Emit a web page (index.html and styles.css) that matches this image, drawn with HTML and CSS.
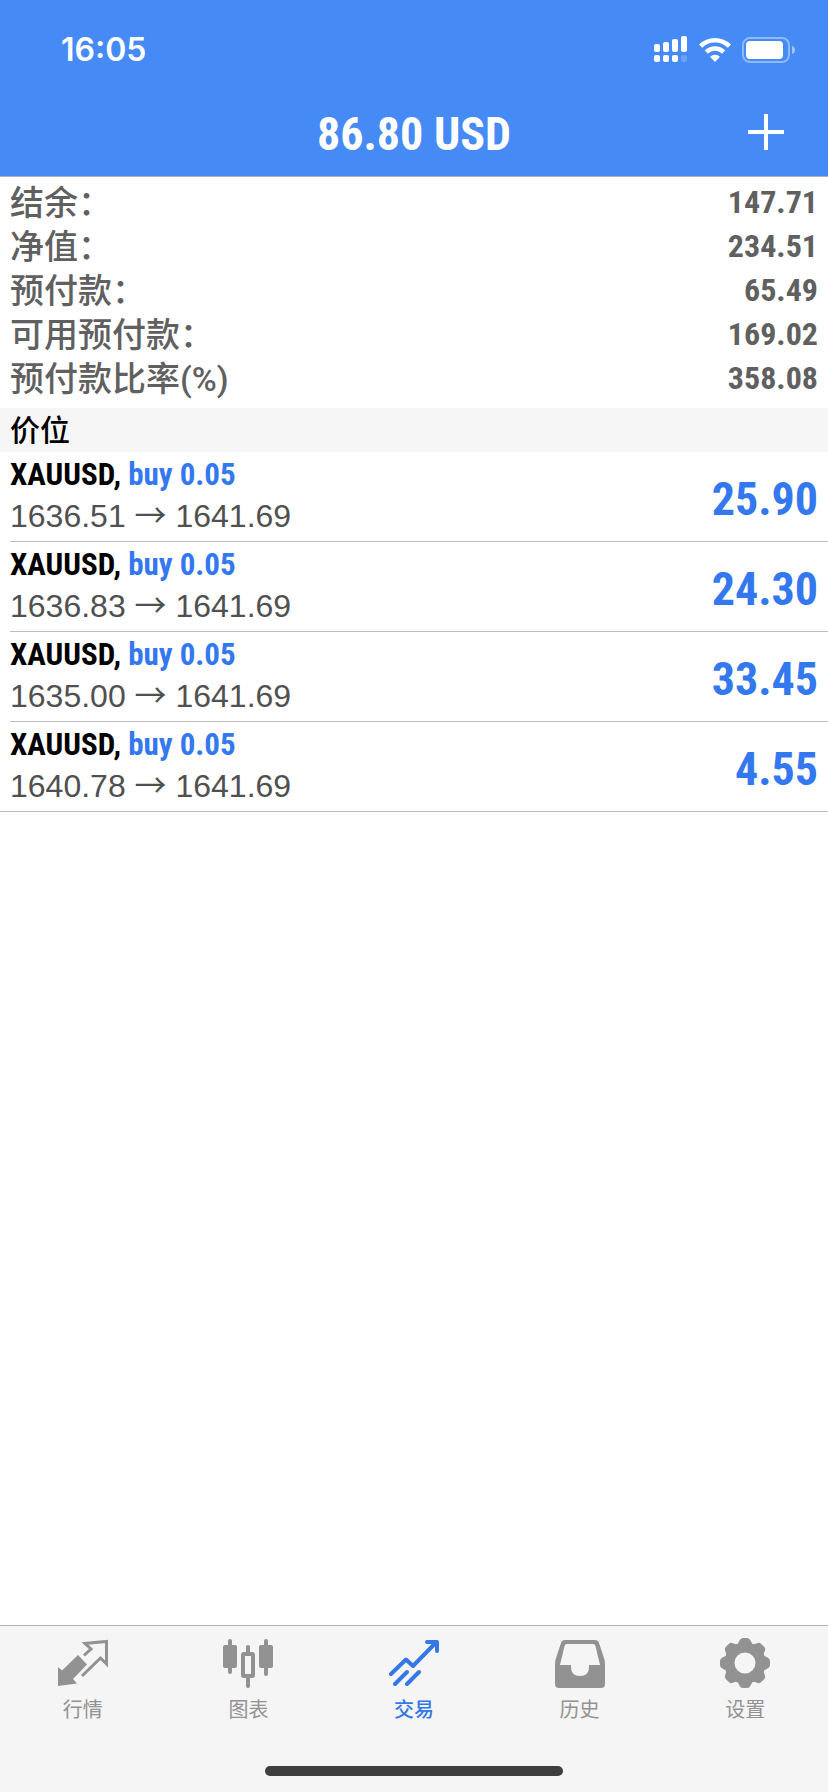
FILE: index.html
```html
<!DOCTYPE html>
<html lang="zh-CN">
<head>
<meta charset="utf-8">
<meta name="viewport" content="width=device-width, initial-scale=1">
<title>交易</title>
<link rel="stylesheet" href="styles.css">
</head>
<body>
<div class="app">
  <header class="header">
    <div class="status">
      <time class="clock">16:05</time>
      <div class="status-icons">
        <svg width="34" height="28" viewBox="0 0 34 28" fill="#fff" aria-hidden="true">
          <rect x="0" y="9" width="6" height="8" rx="2"/><rect x="9" y="7" width="6" height="10" rx="2"/><rect x="18" y="4" width="6" height="13" rx="2"/><rect x="27" y="1" width="6" height="16" rx="2"/>
          <rect x="0" y="20" width="6" height="7" rx="2"/><rect x="9" y="20" width="6" height="7" rx="2"/><rect x="18" y="20" width="6" height="7" rx="2"/><rect x="27" y="20" width="6" height="7" rx="2" opacity=".2"/>
        </svg>
        <svg width="32" height="28" viewBox="0 0 32 28" fill="none" stroke="#fff" stroke-width="4.6" aria-hidden="true">
          <path d="M1.6 11.2a20.5 20.5 0 0 1 28.8 0"/><path d="M7.3 17a12.4 12.4 0 0 1 17.4 0"/><path d="M16 27l-5-5.2a7.2 7.2 0 0 1 10 0z" fill="#fff" stroke="none"/>
        </svg>
        <svg width="54" height="28" viewBox="0 0 54 28" aria-hidden="true">
          <rect x="1" y="3" width="46" height="24" rx="7" fill="none" stroke="#fff" stroke-width="2" opacity=".4"/>
          <rect x="4" y="6" width="37" height="18" rx="4" fill="#fff"/><path d="M50 11c4 1 4 7 0 8z" fill="#fff" opacity=".5"/>
        </svg>
      </div>
    </div>
    <div class="nav">
      <h1 class="title">86.80 USD</h1>
      <button class="add" type="button" aria-label="新订单">
        <svg width="36" height="36" viewBox="0 0 36 36" stroke="#fff" stroke-width="4" aria-hidden="true"><path d="M18 0v36M0 18h36"/></svg>
      </button>
    </div>
  </header>

  <main class="main">
    <dl class="summary">
      <div class="sum-row"><dt>结余：</dt><dd>147.71</dd></div>
      <div class="sum-row"><dt>净值：</dt><dd>234.51</dd></div>
      <div class="sum-row"><dt>预付款：</dt><dd>65.49</dd></div>
      <div class="sum-row"><dt>可用预付款：</dt><dd>169.02</dd></div>
      <div class="sum-row"><dt>预付款比率(%)</dt><dd>358.08</dd></div>
    </dl>
    <h2 class="section">价位</h2>
    <ul class="positions">
      <li class="position"><div class="deal"><p class="symbol">XAUUSD, <span class="side">buy 0.05</span></p><p class="prices">1636.51 <span class="arrow">→</span> 1641.69</p></div><span class="profit">25.90</span></li>
      <li class="position"><div class="deal"><p class="symbol">XAUUSD, <span class="side">buy 0.05</span></p><p class="prices">1636.83 <span class="arrow">→</span> 1641.69</p></div><span class="profit">24.30</span></li>
      <li class="position"><div class="deal"><p class="symbol">XAUUSD, <span class="side">buy 0.05</span></p><p class="prices">1635.00 <span class="arrow">→</span> 1641.69</p></div><span class="profit">33.45</span></li>
      <li class="position"><div class="deal"><p class="symbol">XAUUSD, <span class="side">buy 0.05</span></p><p class="prices">1640.78 <span class="arrow">→</span> 1641.69</p></div><span class="profit">4.55</span></li>
    </ul>
  </main>

  <footer class="footer">
    <nav class="tabs">
      <button class="tab" type="button">
        <svg class="icon" viewBox="0 0 50 50" aria-hidden="true">
          <path d="M20 17L29 26.500L15 41L19 45.500L0 48V29L4 32.500z" fill="currentColor"/>
          <path d="M26 17.500L33 11L27 5.500L48.500 3.500V26L42.500 20L24 38" fill="none" stroke="currentColor" stroke-width="3"/>
        </svg>行情</button>
      <button class="tab" type="button">
        <svg class="icon" viewBox="0 0 50 50" fill="currentColor" aria-hidden="true">
          <rect x="5" y="1" width="4" height="35" rx="2"/><rect x="0" y="7" width="14" height="23" rx="2"/>
          <rect x="41" y="1" width="4" height="37" rx="2"/><rect x="36" y="7" width="14" height="23" rx="2"/>
          <rect x="23" y="7" width="4" height="9" rx="2"/><rect x="23" y="38" width="4" height="12" rx="2"/>
          <rect x="20" y="16" width="10" height="22" rx="1" fill="none" stroke="currentColor" stroke-width="4"/>
        </svg>图表</button>
      <button class="tab active" type="button" aria-current="page">
        <svg class="icon" viewBox="0 0 50 50" fill="none" stroke="currentColor" stroke-width="4" stroke-linecap="round" stroke-linejoin="round" aria-hidden="true">
          <path d="M2 36L17 21.500L24 28L47 4.500M38 4H48V13M6 46L18 34M18 46L30 34"/>
        </svg>交易</button>
      <button class="tab" type="button">
        <svg class="icon" viewBox="0 0 50 50" fill="currentColor" aria-hidden="true">
          <path fill-rule="evenodd" d="M10 2H40Q43 2 44 5L49 20Q50 23 50 26V46Q50 50 46 50H4Q0 50 0 46V26Q0 23 1 20L6 5Q7 2 10 2zM12 6Q10 6 9.500 8L5 27H16V29Q16 38 25 38Q34 38 34 29V27H45L40.500 8Q40 6 38 6z"/>
        </svg>历史</button>
      <button class="tab" type="button">
        <svg class="icon" viewBox="0 0 50 50" fill="currentColor" aria-hidden="true">
          <circle cx="25" cy="25" r="15.500" fill="none" stroke="currentColor" stroke-width="10"/>
          <g id="teeth"><path id="tooth" d="M15 8Q18.500 6 19.500 2.500Q20.500 0 23 0H27Q29.500 0 30.500 2.500Q31.500 6 35 8z"/><use href="#tooth" transform="rotate(90 25 25)"/><use href="#tooth" transform="rotate(180 25 25)"/><use href="#tooth" transform="rotate(270 25 25)"/></g>
          <use href="#teeth" transform="rotate(45 25 25)"/>
        </svg>设置</button>
    </nav>
    <div class="home"></div>
  </footer>
</div>
</body>
</html>
```
FILE: styles.css
```css
* { box-sizing: border-box; margin: 0; padding: 0; }

:root { --condensed: "Roboto Condensed", Roboto, sans-serif; }

body {
  background: #fff;
  color: #000;
  font-family: "Liberation Sans", "Noto Sans CJK SC", sans-serif;
}

button { border: 0; background: none; font: inherit; color: inherit; }

.app { display: flex; flex-direction: column; min-height: 100vh; }

.header { background: #458af5; color: #fff; border-bottom: 1px solid #a9b4c6; }

.status {
  display: flex;
  align-items: center;
  justify-content: space-between;
  height: 88px;
  padding: 12px 32px 0 61px;
}

.clock { font: 600 32px/40px Inter, sans-serif; }
.status-icons { display: flex; gap: 11px; padding-bottom: 2px; }

.nav {
  display: grid;
  grid-template-columns: 1fr auto 1fr;
  align-items: center;
  height: 88px;
  padding: 0 44px;
}

.title { grid-column: 2; padding-top: 4px; font: 700 46px/60px var(--condensed); }

.add { justify-self: end; display: flex; }

.main { flex: 1; }

.summary {
  padding: 4px 10px 7px;
  color: #606060;
  font-size: 34px;
  line-height: 44px;
}

.sum-row { display: flex; justify-content: space-between; }
.sum-row dt { font-family: Roboto, "Noto Sans CJK SC", sans-serif; font-weight: 500; }
.sum-row dd { font: 700 32px/42px var(--condensed); }

.section {
  padding: 2px 10px 0;
  background: #f6f6f6;
  font: 500 30px/42px Roboto, "Noto Sans CJK SC", sans-serif;
}

.positions { list-style: none; }

.position {
  display: flex;
  align-items: center;
  justify-content: space-between;
  height: 90px;
  margin-left: 10px;
  padding-right: 10px;
  border-bottom: 1px solid #bdbdbd;
}

.position:last-child { margin-left: 0; padding-left: 10px; }

.deal { padding-bottom: 2px; }
.symbol { font: 700 31px/40px var(--condensed); }
.side, .profit { color: #3478f0; }
.prices { color: #505050; font-size: 32px; line-height: 42px; }
.arrow { font-family: Roboto, "Noto Sans CJK SC", sans-serif; }
.profit { padding-top: 4px; font: 700 46px/60px var(--condensed); }

.footer { background: #f5f5f5; border-top: 1px solid #b2b2b2; }
.tabs { display: grid; grid-template-columns: repeat(5, 1fr); padding-top: 12px; }

.tab {
  display: flex;
  flex-direction: column;
  align-items: center;
  gap: 6px;
  color: #929292;
  font: 400 20px/30px "Noto Sans CJK SC", sans-serif;
}

.tab.active { color: #3478e8; font-weight: 500; }
.icon { width: 50px; height: 50px; }

.home {
  width: 36%;
  height: 10px;
  margin: 42px auto 16px;
  border-radius: 5px;
  background: #3e3e3e;
}
```
